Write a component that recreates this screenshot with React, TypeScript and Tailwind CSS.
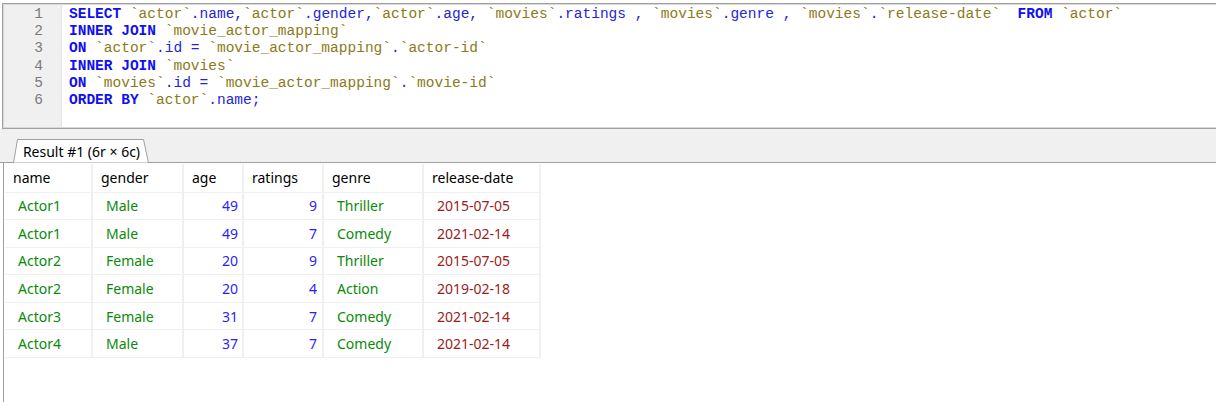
import React from "react";

const SQL_LINES = [
  "SELECT `actor`.name,`actor`.gender,`actor`.age, `movies`.ratings , `movies`.genre , `movies`.`release-date`  FROM `actor`",
  "INNER JOIN `movie_actor_mapping`",
  "ON `actor`.id = `movie_actor_mapping`.`actor-id`",
  "INNER JOIN `movies`",
  "ON `movies`.id = `movie_actor_mapping`.`movie-id`",
  "ORDER BY `actor`.name;",
];

const KEYWORDS = new Set(["SELECT", "FROM", "INNER", "JOIN", "ON", "ORDER", "BY"]);

function highlight(line: string) {
  const parts = line.split(/(`[^`]*`|\b[A-Z]{2,}\b)/).filter((p) => p !== "");
  return parts.map((p, i) => {
    if (p.startsWith("`")) {
      return (
        <span key={i} className="text-[#8a7a18]">
          {p}
        </span>
      );
    }
    if (KEYWORDS.has(p)) {
      return (
        <span key={i} className="font-bold text-[#1010f0]">
          {p}
        </span>
      );
    }
    return (
      <span key={i} className="text-[#2424d8]">
        {p}
      </span>
    );
  });
}

type Row = {
  name: string;
  gender: string;
  age: number;
  ratings: number;
  genre: string;
  date: string;
};

const ROWS: Row[] = [
  { name: "Actor1", gender: "Male", age: 49, ratings: 9, genre: "Thriller", date: "2015-07-05" },
  { name: "Actor1", gender: "Male", age: 49, ratings: 7, genre: "Comedy", date: "2021-02-14" },
  { name: "Actor2", gender: "Female", age: 20, ratings: 9, genre: "Thriller", date: "2015-07-05" },
  { name: "Actor2", gender: "Female", age: 20, ratings: 4, genre: "Action", date: "2019-02-18" },
  { name: "Actor3", gender: "Female", age: 31, ratings: 7, genre: "Comedy", date: "2021-02-14" },
  { name: "Actor4", gender: "Male", age: 37, ratings: 7, genre: "Comedy", date: "2021-02-14" },
];

const COLS = [
  { key: "name", w: "w-[87px]" },
  { key: "gender", w: "w-[91px]" },
  { key: "age", w: "w-[60px]" },
  { key: "ratings", w: "w-[80px]" },
  { key: "genre", w: "w-[100px]" },
  { key: "release-date", w: "w-[117px]" },
];

const uiFont = { fontFamily: '"Noto Sans", "Liberation Sans", sans-serif' };
const monoFont = { fontFamily: '"Liberation Mono", "DejaVu Sans Mono", monospace' };

export default function App() {
  return (
    <div className="flex h-[402px] w-[1216px] flex-col overflow-hidden bg-white pt-[3px]">
      {/* query editor */}
      <div className="ml-[2px] h-[126px] shrink-0 border-b border-l border-t border-[#a0a0a0]">
        <div className="flex h-full border-b border-l border-t border-[#d8d8d8]">
          <div
            className="w-[58px] shrink-0 border-r border-[#e4e4e4] bg-[#f0f0f0] pt-[1px] pr-[18px] text-right text-[14.5px] leading-[17.2px] text-[#7a7a7a]"
            style={monoFont}
          >
            {SQL_LINES.map((_, i) => (
              <div key={i}>{i + 1}</div>
            ))}
          </div>
          <div
            className="flex-1 whitespace-pre pl-[7px] pt-[1px] text-[14.5px] leading-[17.2px]"
            style={monoFont}
          >
            {SQL_LINES.map((line, i) => (
              <div key={i}>{highlight(line)}</div>
            ))}
          </div>
        </div>
      </div>

      {/* tab strip */}
      <div className="flex h-[34px] shrink-0 items-end border-b border-[#a0a0a0] bg-[#f0f0f0] pl-[13px]">
        <div className="relative -mb-px flex h-[24px] w-[136px] items-center justify-center pl-[1px]">
          <svg className="absolute inset-0" width="136" height="24" viewBox="0 0 136 24">
            <polygon points="0.5,24 4.5,0.5 130.5,0.5 135.5,24" fill="#ffffff" stroke="#a0a0a0" strokeWidth="1" />
          </svg>
          <span className="relative text-[14px] text-black" style={uiFont}>
            Result #1 (6r × 6c)
          </span>
        </div>
      </div>

      {/* results grid */}
      <div className="ml-[3px] flex-1 border-l border-[#a0a0a0] pl-[1px] pt-[1px]" style={uiFont}>
        <table className="border-collapse text-[14px]">
          <thead>
            <tr className="h-[28px]">
              {COLS.map((c) => (
                <th
                  key={c.key}
                  className={`${c.w} border-b border-r-2 border-[#f0f0f0] pl-[8px] text-left font-normal text-black`}
                >
                  {c.key}
                </th>
              ))}
            </tr>
          </thead>
          <tbody>
            {ROWS.map((r, i) => (
              <tr key={i} className="h-[27.6px]">
                <td className="border-b border-r-2 border-[#f0f0f0] pl-[13px] text-[#0a8a0a]">{r.name}</td>
                <td className="border-b border-r-2 border-[#f0f0f0] pl-[13px] text-[#0a8a0a]">{r.gender}</td>
                <td className="border-b border-r-2 border-[#f0f0f0] pr-[4px] text-right text-[#2a1eff]">{r.age}</td>
                <td className="border-b border-r-2 border-[#f0f0f0] pr-[5px] text-right text-[#2a1eff]">{r.ratings}</td>
                <td className="border-b border-r-2 border-[#f0f0f0] pl-[13px] text-[#0a8a0a]">{r.genre}</td>
                <td className="border-b border-r-2 border-[#f0f0f0] pl-[13px] text-[#9a1c1c]">{r.date}</td>
              </tr>
            ))}
          </tbody>
        </table>
      </div>
    </div>
  );
}
